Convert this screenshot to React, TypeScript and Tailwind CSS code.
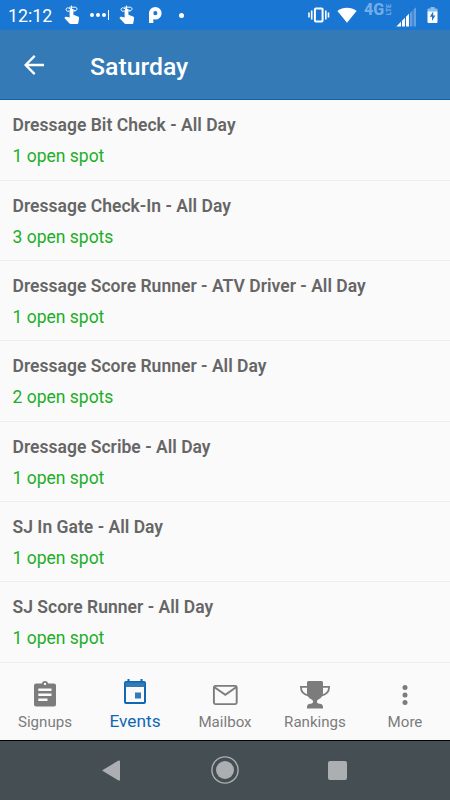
import type { ReactNode } from "react";

interface EventSlot {
  title: string;
  spots: number;
}

const slots: EventSlot[] = [
  { title: "Dressage Bit Check - All Day", spots: 1 },
  { title: "Dressage Check-In - All Day", spots: 3 },
  { title: "Dressage Score Runner - ATV Driver - All Day", spots: 1 },
  { title: "Dressage Score Runner - All Day", spots: 2 },
  { title: "Dressage Scribe - All Day", spots: 1 },
  { title: "SJ In Gate - All Day", spots: 1 },
  { title: "SJ Score Runner - All Day", spots: 1 },
];

function TouchIcon() {
  return (
    <svg width="16" height="20" viewBox="0 0 16 20" fill="none">
      <path
        d="M5.600 5.500a1.900 1.900 0 0 1 3.800 0v4.300l4.600 1.700c.8.300 1.200.900 1.100 1.800l-.800 4.600c-.1.700-.6 1.100-1.300 1.100H6.600c-.4 0-.8-.2-1.100-.5L.400 12.900l.900-.9c.3-.3.700-.3 1.100-.2l3.200.8z"
        fill="white"
      />
      <path
        d="M5.600 6.200H3.900a1.700 1.700 0 1 1 .8-3.100l5.600 2.200a1.700 1.700 0 1 0 .8-3.100H5.200M7.500.600v4M9.400 6h2"
        stroke="white"
        strokeWidth="1"
      />
    </svg>
  );
}

function StatusBar() {
  return (
    <div className="flex h-[30px] items-center bg-[#1976d2] pl-2 pr-[12px] text-white">
      <span className="w-[56px] pt-px text-[17.800px] leading-[30px]">12:12</span>
      <TouchIcon />
      <svg className="ml-[10px]" width="20" height="12" viewBox="0 0 20 12" fill="white">
        <circle cx="2" cy="6" r="2" />
        <circle cx="8" cy="6" r="2" />
        <circle cx="14" cy="6" r="2" />
        <rect x="18" y="1" width="1" height="10" />
      </svg>
      <div className="ml-[9px]">
        <TouchIcon />
      </div>
      <svg className="ml-[13px]" width="14" height="18" viewBox="0 0 14 18" fill="none">
        <circle cx="7.300" cy="7.200" r="4.200" stroke="white" strokeWidth="4.200" />
        <rect x="1" y="6.500" width="4.300" height="10.500" fill="white" />
      </svg>
      <div className="ml-[17px] size-[5px] rounded-full bg-white" />

      {/* Right side indicators */}
      <svg className="ml-auto" width="22" height="18" viewBox="0 0 22 18" fill="none" stroke="white">
        <rect x="6.900" y="2.400" width="7.700" height="13.200" rx="1" strokeWidth="2" />
        <path d="M3.700 4.500v9M17.800 4.500v9M1 6.500v5M20.500 6.500v5" strokeWidth="1.600" />
      </svg>
      <svg className="ml-[7px]" width="20" height="16" viewBox="0 0 20 16" fill="white">
        <path d="M.400 4C6-.300 14-.300 19.600 4L10 15.700z" />
      </svg>
      <div className="mb-[10px] ml-[7px] flex h-[14px] w-[29px] items-center justify-between text-[#72aee9]">
        <span className="text-[16px] font-extrabold leading-[14px]">4G</span>
        <span className="rotate-180 text-[7px] font-bold leading-[7px] [writing-mode:vertical-rl]">LTE</span>
      </div>
      <svg className="ml-[3px] mt-[3px]" width="21" height="20" viewBox="0 0 21 20" fill="white">
        <path d="M.300 19.500 5 14.800v4.700zM6 13.800l3-3v8.700H6zM10 9.800l3-3v12.700h-3z" />
        <path d="M14 6l2.500-2.500v16H14zM17.500 2.600 20 .200v19.300h-2.500z" fill="#639fe1" />
      </svg>
      <svg className="ml-[10px]" width="11" height="17" viewBox="0 0 11 17">
        <rect x="3.500" y="0" width="4" height="2.500" fill="#8abdf0" />
        <rect x=".500" y="1.500" width="10" height="4" rx="1" fill="#8abdf0" />
        <path d="M.500 4.500h10V15a1 1 0 0 1-1 1h-8a1 1 0 0 1-1-1z" fill="white" />
        <path d="M6.200 4.500 2.800 9.700H5v4.200l3.400-5.300H6.200z" fill="#1976d2" />
      </svg>
    </div>
  );
}

function Header() {
  return (
    <header className="flex h-[70px] items-center border-b border-[#17609f] bg-[#337ab7] text-white">
      <svg className="ml-[24px]" width="20" height="20" viewBox="0 0 20 20" fill="none" stroke="white" strokeWidth="2.300">
        <path d="M20 10H1.700M10.700.900 1.600 10l9.100 9.100" />
      </svg>
      <h1 className="ml-[46px] mt-[4px] text-[24.800px] font-medium leading-[30px]">Saturday</h1>
    </header>
  );
}

function SlotRow({ title, spots }: EventSlot) {
  return (
    <li className="h-[80.350px] border-b border-[#eee] pl-[12.500px] pt-[14px] last:border-b-0">
      <p className="text-[17.500px] font-semibold leading-[23px] tracking-[0.020px] text-[#666]">{title}</p>
      <p className="mt-[8px] text-[17.500px] leading-[23px] text-[#21ae27]">
        {spots} open {spots === 1 ? "spot" : "spots"}
      </p>
    </li>
  );
}

function Tab({ label, active, children }: { label: string; active?: boolean; children: ReactNode }) {
  return (
    <div
      className={`flex w-[90px] flex-col items-center ${
        active ? "pt-[12px] text-[#0f67b5]" : "pt-[15px] text-[#7c7c7c]"
      }`}
    >
      <svg width="32" height="32" viewBox="0 0 32 32" fill="currentColor">
        {children}
      </svg>
      <span className={active ? "mt-[3px] text-[17.300px] leading-[22px]" : "mt-[2px] text-[15.100px] leading-[20px]"}>
        {label}
      </span>
    </div>
  );
}

function TabBar() {
  return (
    <nav className="flex h-[78px] shrink-0 border-t border-[#eee]">
      <Tab label="Signups">
        <path
          fillRule="evenodd"
          d="M7 5.500h5.800a3.300 3.300 0 0 1 6.400 0H25a2 2 0 0 1 2 2v19a2 2 0 0 1-2 2H7a2 2 0 0 1-2-2v-19a2 2 0 0 1 2-2zm2.300 5V13h13.200v-2.500zm0 5V18h13.200v-2.500zm0 5V23h9.200v-2.500zM16 4.700A1.200 1.200 0 1 0 16 7.100 1.200 1.200 0 0 0 16 4.700z"
        />
      </Tab>
      <Tab label="Events" active>
        <path
          fillRule="evenodd"
          d="M8.500 4h2v2h11V4h2v2H25a2 2 0 0 1 2 2v19a2 2 0 0 1-2 2H7a2 2 0 0 1-2-2V8a2 2 0 0 1 2-2h1.500zM7 12v15h18V12z"
        />
        <path d="M6.500 7.500h19V12h-19zM16 17.500h6v6h-6z" fill="#337ab7" />
      </Tab>
      <Tab label="Mailbox">
        <rect x="4.900" y="7.900" width="22.800" height="18.200" rx="1.500" fill="none" stroke="currentColor" strokeWidth="1.900" />
        <path d="M5.500 9.300 16.300 16.900 27.100 9.300" fill="none" stroke="currentColor" strokeWidth="1.900" />
      </Tab>
      <Tab label="Rankings">
        <path d="M8 5c0-1.400.7-2 2-2h12c1.300 0 2 .6 2 2v9c0 4.500-1.800 6-4.300 7.200-1.100.5-1.700 1.200-1.700 2.400 0 1.400.6 2 2.500 2.200 2.500.3 3.500 1.400 3.500 3.200v1.500H8V29c0-1.800 1-2.900 3.500-3.200 1.900-.2 2.500-.8 2.500-2.200 0-1.200-.6-1.900-1.700-2.400C9.800 20 8 18.500 8 14z" />
        <path
          d="M8.500 8.800H1.900c0 5 2.300 8 8.100 8.700M23.500 8.800h6.600c0 5-2.300 8-8.100 8.700"
          fill="none"
          stroke="currentColor"
          strokeWidth="1.800"
        />
      </Tab>
      <Tab label="More">
        <circle cx="16" cy="9.500" r="2.500" />
        <circle cx="16" cy="17" r="2.500" />
        <circle cx="16" cy="24.500" r="2.500" />
      </Tab>
    </nav>
  );
}

function SystemNav() {
  return (
    <div className="flex h-[60px] shrink-0 items-center border-t border-black bg-[#454e53] pb-px pl-[102px]">
      <svg width="18" height="21" viewBox="0 0 18 21" fill="#abafb2">
        <path d="M0 10.500 16.500.500c.700-.300 1.500 0 1.500.800v18.400c0 .800-.800 1.100-1.500.800z" />
      </svg>
      <svg className="ml-[91px]" width="28" height="28" viewBox="0 0 28 28" fill="none">
        <circle cx="14" cy="14" r="13.100" stroke="#abafb2" strokeWidth="1.400" />
        <circle cx="14" cy="14" r="9" fill="#abafb2" />
      </svg>
      <div className="ml-[89px] size-[19px] rounded-[2px] bg-[#abafb2]" />
    </div>
  );
}

export default function App() {
  return (
    <div className="flex h-[800px] w-[450px] flex-col overflow-hidden bg-[#fafafa] font-['Roboto',sans-serif]">
      <StatusBar />
      <Header />
      <ul className="min-h-0 flex-1 overflow-hidden pt-[0.400px]">
        {slots.map((slot) => (
          <SlotRow key={slot.title} {...slot} />
        ))}
      </ul>
      <TabBar />
      <SystemNav />
    </div>
  );
}
